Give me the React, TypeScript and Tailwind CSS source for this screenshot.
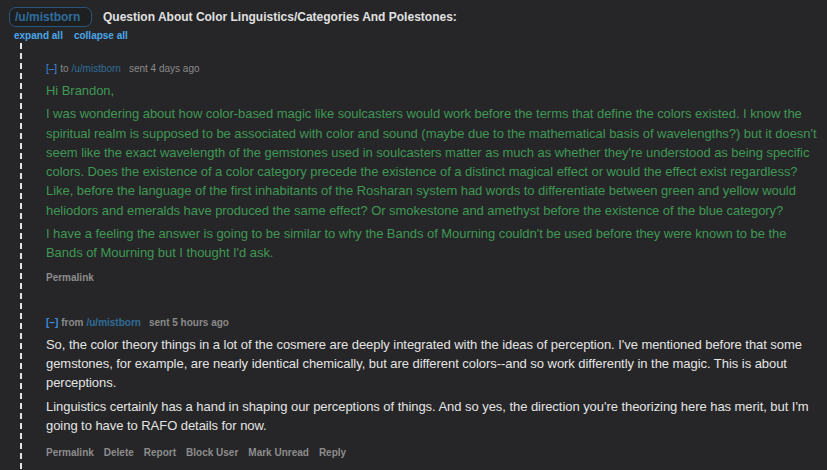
import React from "react";

const font = { fontFamily: '"Liberation Sans", Arial, sans-serif' };

function Header({ dir, bold }: { dir: string; bold?: boolean }) {
  return (
    <div className={`flex items-center text-[10px] leading-[14px] ${bold ? "font-bold" : "font-normal"}`}>
      <span className="text-[#3b8fe0]">[–]</span>
      <span className="ml-[3px] text-[#8a8a8a]">{dir}</span>
      <span className="ml-[3px] text-[#2f6d98]">/u/mistborn</span>
      <span className="ml-[8px] text-[#8a8a8a]">{bold ? "sent 5 hours ago" : "sent 4 days ago"}</span>
    </div>
  );
}

function Actions({ items }: { items: string[] }) {
  return (
    <div className="flex gap-[10px] text-[10px] font-bold leading-[14px] text-[#8d8d8d]">
      {items.map((a) => (
        <span key={a}>{a}</span>
      ))}
    </div>
  );
}

export default function App() {
  return (
    <div className="h-[470px] w-full overflow-hidden bg-[#262628]" style={font}>
      <div className="flex items-center pl-[9px] pt-[7px]">
        <span className="flex h-[20px] w-[83px] items-center rounded-[7px] border border-[#29567d] bg-[#1e1f21] pl-[5px] text-[12px] font-bold text-[#2e6e9e]">
          /u/mistborn
        </span>
        <span className="ml-[11px] text-[12px] font-bold text-[#e0e0e0]">
          Question About Color Linguistics/Categories And Polestones:
        </span>
      </div>
      <div className="mt-[2px] flex gap-[11px] pl-[14px] text-[10px] font-bold leading-[14px] text-[#4aa6ea]">
        <span>expand all</span>
        <span>collapse all</span>
      </div>
      <div className="ml-[20px] flex">
        <div className="w-[2px] shrink-0 bg-[repeating-linear-gradient(to_bottom,#e6e6e6_0_6px,transparent_6px_10px)]" />
        <div className="pl-[24px] pr-[6px] pt-[19px]">
          <Header dir="to" />
          <div className="mt-[5px] text-[13px] leading-[19.3px] tracking-[-0.05px] text-[#3f9853]">
            <p className="mb-[4px]">Hi Brandon,</p>
            <p className="mb-[4px]">
              I was wondering about how color-based magic like soulcasters would work before the terms that define the colors existed. I know the spiritual realm is supposed to be associated with color and sound (maybe due to the mathematical basis of wavelengths?) but it doesn't seem like the exact wavelength of the gemstones used in soulcasters matter as much as whether they're understood as being specific colors. Does the existence of a color category precede the existence of a distinct magical effect or would the effect exist regardless? Like, before the language of the first inhabitants of the Rosharan system had words to differentiate between green and yellow would heliodors and emeralds have produced the same effect? Or smokestone and amethyst before the existence of the blue category?
            </p>
            <p>
              I have a feeling the answer is going to be similar to why the Bands of Mourning couldn't be used before they were known to be the Bands of Mourning but I thought I'd ask.
            </p>
          </div>
          <div className="mt-[8px]">
            <Actions items={["Permalink"]} />
          </div>
          <div className="mt-[31px]">
            <Header dir="from" bold />
          </div>
          <div className="mt-[5px] text-[13px] leading-[19.3px] tracking-[-0.05px] text-[#e4e4e4]">
            <p className="mb-[4px]">
              So, the color theory things in a lot of the cosmere are deeply integrated with the ideas of perception. I've mentioned before that some gemstones, for example, are nearly identical chemically, but are different colors--and so work differently in the magic. This is about perceptions.
            </p>
            <p>
              Linguistics certainly has a hand in shaping our perceptions of things. And so yes, the direction you're theorizing here has merit, but I'm going to have to RAFO details for now.
            </p>
          </div>
          <div className="mt-[11px] pb-[20px]">
            <Actions items={["Permalink", "Delete", "Report", "Block User", "Mark Unread", "Reply"]} />
          </div>
        </div>
      </div>
    </div>
  );
}
